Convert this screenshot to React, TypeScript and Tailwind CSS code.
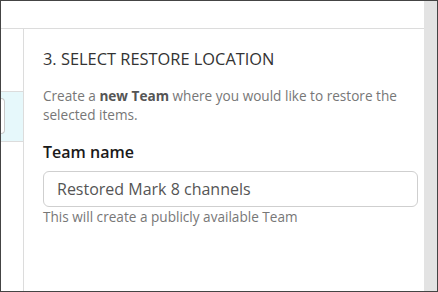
const font = { fontFamily: '"Open Sans", "Liberation Sans", sans-serif' }

export default function App() {
  return (
    <div
      className="flex h-[292px] w-[438px] border border-[#444] bg-white"
      style={font}
    >
      <div className="flex min-w-0 flex-1 flex-col">
        <div className="h-[28px] shrink-0 border-b border-[#dcdcdc]" />
        <div className="flex flex-1">
          <LeftRail />
          <RestoreLocation />
        </div>
      </div>
      <div className="w-[13px] shrink-0 bg-[#e3e3e3]" />
    </div>
  )
}

function LeftRail() {
  return (
    <div className="flex w-[23px] shrink-0 flex-col border-r border-[#dcdcdc]">
      <div className="h-[62px]" />
      <div className="flex h-[51px] items-start border-y border-[#dcdcdc] bg-[#e6f8fb] pt-[6px]">
        <div className="h-[36px] w-[4px] rounded-r-[5px] border-y border-r border-[#c8c8c8] bg-white" />
      </div>
    </div>
  )
}

function RestoreLocation() {
  return (
    <div className="min-w-0 flex-1 pl-[19px] pr-[6px] pt-[18px]">
      <h2 className="text-[16.4px] leading-[24px] font-normal uppercase text-[#333]">
        3. Select restore location
      </h2>
      <p className="mt-[15px] text-[13.6px] leading-[19px] text-[#777]">
        Create a <strong className="font-bold text-[#555]">new Team</strong>{' '}
        where you would like to restore the selected items.
      </p>
      <label className="mt-[17px] block text-[16px] leading-[22px] font-semibold text-[#1a1a1a]">
        Team name
      </label>
      <div className="mt-[8px] flex h-[36px] items-center rounded-[6px] border border-[#cfcfcf] px-[13px] text-[16px] leading-[22px] text-[#555]">
        Restored Mark 8 channels
      </div>
      <p className="mt-[1px] text-[13.6px] leading-[18px] text-[#777]">
        This will create a publicly available Team
      </p>
    </div>
  )
}
